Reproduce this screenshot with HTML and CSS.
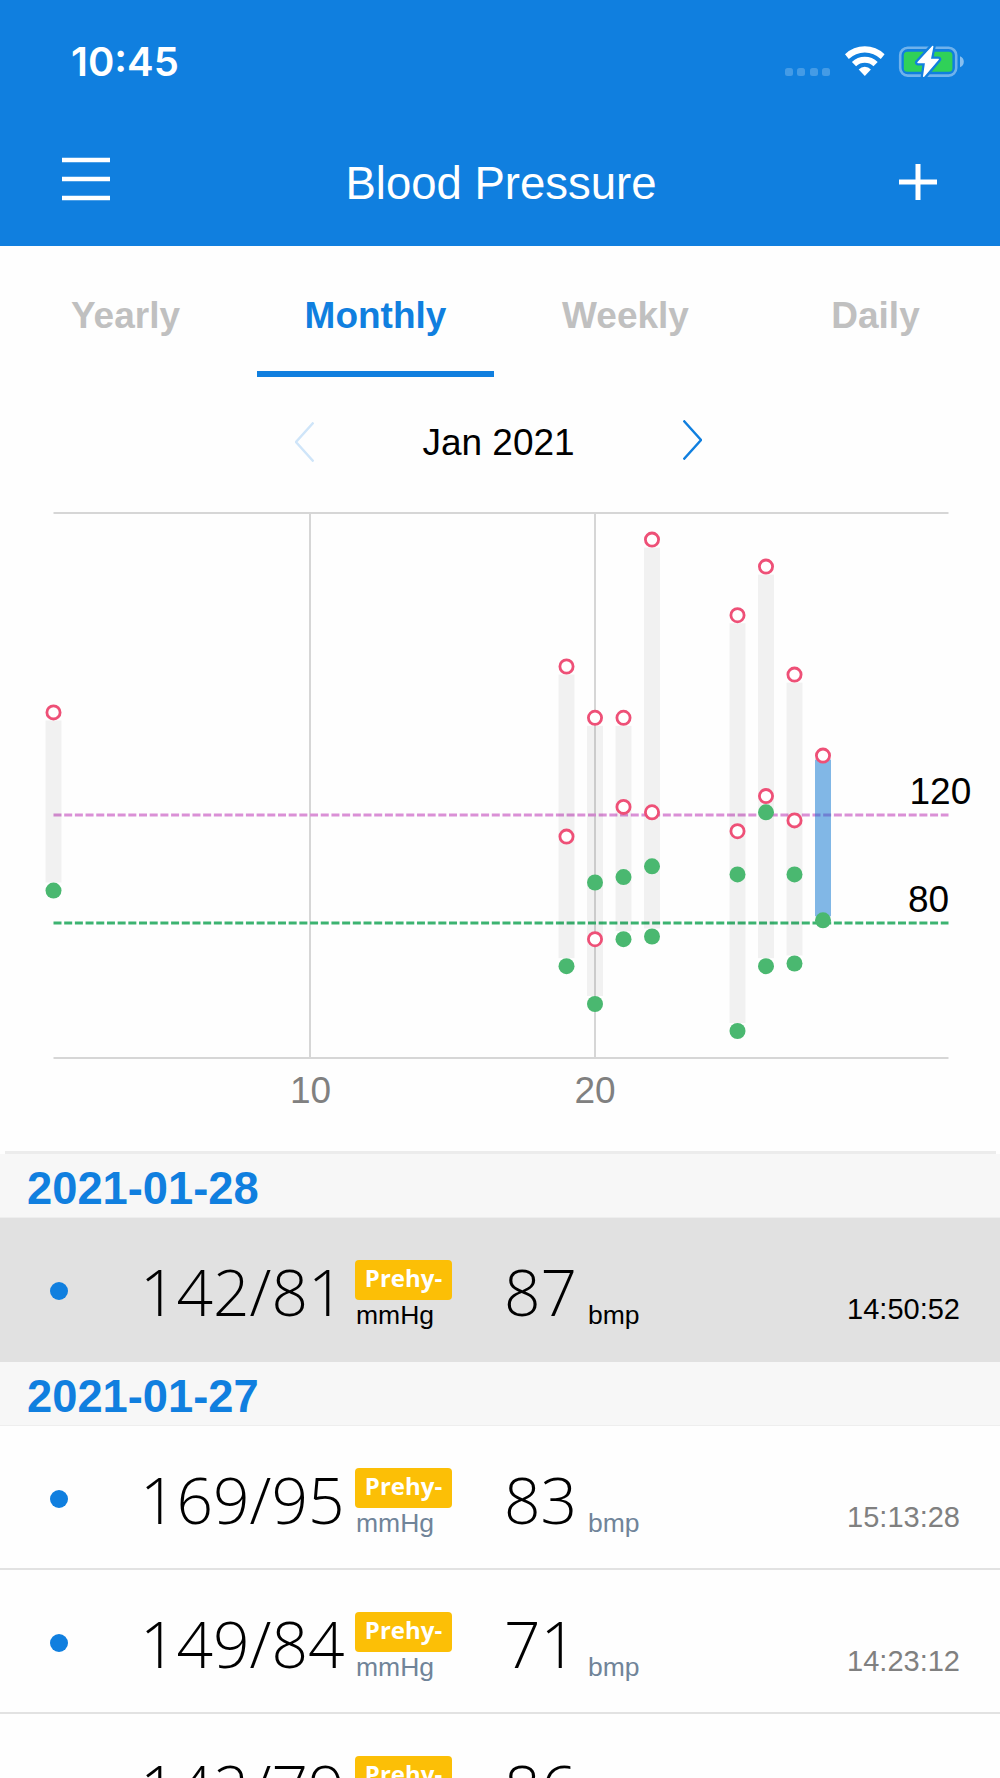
FILE: index.html
```html
<!DOCTYPE html>
<html lang="en">
<head>
  <meta charset="UTF-8" />
  <meta name="viewport" content="width=device-width, initial-scale=1.0"/>
  <title>Blood Pressure</title>
  <link rel="stylesheet" href="styles.css">
</head>
<body>
  <header class="header">
    <div class="status-bar">
      <span class="clock">10:45</span>
      <div class="status-icons">
        <div class="signal"><i></i><i></i><i></i><i></i></div>
        <svg class="wifi" width="42" height="32" viewBox="0 0 42 32" fill="#fff">
          <path d="M1 8.300A28.500 28.500 0 0 1 40.600 8.300L36.800 13A23 23 0 0 0 4.800 13Z"/>
          <path d="M7.900 16A18.200 18.200 0 0 1 33.700 16L29.500 20.300A12.600 12.600 0 0 0 12.100 20.300Z"/>
          <path d="M14.700 23.400A8.600 8.600 0 0 1 26.900 23.400L20.800 30Z"/>
        </svg>
        <svg class="battery" width="68" height="36" viewBox="0 0 68 36">
          <rect x="2.200" y="3.800" width="56" height="27.800" rx="7.500" fill="none" stroke="#fff" stroke-opacity=".4" stroke-width="2.600"/>
          <path d="M62 12.200c2.700 1 3.800 3 3.800 5.500s-1.100 4.500-3.800 5.500z" fill="#fff" fill-opacity=".5"/>
          <rect x="5.800" y="7.700" width="48.600" height="20" rx="3.500" fill="#30d158"/>
          <path d="M34.700 2.200L20 18.500H27.700L25.700 32.600L40.200 15.400H32.200Z" fill="#fff" stroke="#107fdf" stroke-width="6" stroke-linejoin="round"/>
          <path d="M34.700 2.500L20 18.500H27.700L25.700 32.300L40.200 15.400H32.200Z" fill="#fff" stroke="#fff" stroke-width="1.400" stroke-linejoin="round"/>
        </svg>
      </div>
    </div>
    <div class="nav-bar">
      <svg class="menu-icon" width="48" height="44" viewBox="0 0 48 44" stroke="#fff" stroke-width="4.600">
        <path d="M0 3H48M0 22H48M0 41H48"/>
      </svg>
      <h1>Blood Pressure</h1>
      <svg class="plus-icon" width="38" height="38" viewBox="0 0 38 38" stroke="#fff" stroke-width="5">
        <path d="M0 19H38M19 1V37"/>
      </svg>
    </div>
  </header>

  <nav class="tabs">
    <a class="tab">Yearly</a>
    <a class="tab active">Monthly</a>
    <a class="tab">Weekly</a>
    <a class="tab">Daily</a>
  </nav>

  <div class="month">
    <svg class="prev" width="19" height="40" viewBox="0 0 19 40" fill="none" stroke="#cfe5f9" stroke-width="2.400">
      <path d="M18.500 .5L1 20L18.500 39.500"/>
    </svg>
    <span>Jan 2021</span>
    <svg class="next" width="19" height="40" viewBox="0 0 19 40" fill="none" stroke="#107fdf" stroke-width="2.400">
      <path d="M.5 .5L18 20L.5 39.500"/>
    </svg>
  </div>

  <svg class="chart" width="1000" height="644" viewBox="0 0 1000 644">
    <path class="grid" d="M53.500 6H948.500M53.500 551H948.500M310 6V551M595 6V551"/>
    <path class="limit-sys" d="M53.500 308H948.500"/>
    <path class="limit-dia" d="M53.500 416H948.500"/>
    <g id="bars"></g>
    <g id="dots"></g>
    <text x="909.500" y="297">120</text>
    <text x="908" y="405">80</text>
    <text class="day" x="310.500" y="595.500">10</text>
    <text class="day" x="595" y="595.500">20</text>
  </svg>

  <div class="list">
    <h2>2021-01-28</h2>
    <div class="row selected">
      <span class="dot"></span>
      <span class="value">142/81</span>
      <div class="state"><span class="badge">Prehy-</span><span class="unit">mmHg</span></div>
      <span class="value">87</span>
      <span class="unit bmp">bmp</span>
      <span class="time">14:50:52</span>
    </div>
    <h2>2021-01-27</h2>
    <div class="row">
      <span class="dot"></span>
      <span class="value">169/95</span>
      <div class="state"><span class="badge">Prehy-</span><span class="unit">mmHg</span></div>
      <span class="value">83</span>
      <span class="unit bmp">bmp</span>
      <span class="time">15:13:28</span>
    </div>
    <div class="row">
      <span class="dot"></span>
      <span class="value">149/84</span>
      <div class="state"><span class="badge">Prehy-</span><span class="unit">mmHg</span></div>
      <span class="value">71</span>
      <span class="unit bmp">bmp</span>
      <span class="time">14:23:12</span>
    </div>
    <div class="row">
      <span class="dot"></span>
      <span class="value">142/79</span>
      <div class="state"><span class="badge">Prehy-</span></div>
      <span class="value">86</span>
    </div>
  </div>

  <script src="chart.js"></script>
</body>
</html>
```
FILE: styles.css
```css
:root {
  --blue: #107fdf;
  --yellow: #fcbf06;
  --green: #4ab870;
  --red: #ee5077;
  --gray: #808080;
}

* {
  box-sizing: border-box;
}

body {
  margin: 0;
  width: 1000px;
  height: 1778px;
  overflow: hidden;
  background: #fefefe;
  color: #000;
  font-family: "Liberation Sans", Arial, sans-serif;
}

h1, h2 {
  margin: 0;
}

svg {
  display: block;
  flex: none;
}

.header {
  height: 246px;
  background: var(--blue);
  color: #fff;
}

.status-bar {
  display: flex;
  justify-content: space-between;
  align-items: center;
  height: 120px;
  padding: 3px 34px 0 71px;
}

.clock {
  font: 600 40px "Inter", sans-serif;
}

.status-icons {
  display: flex;
  align-items: center;
}

.signal {
  display: flex;
  gap: 4.5px;
  margin: 20px 14px 0 0;
}

.signal i {
  width: 8px;
  height: 8px;
  border-radius: 2.5px;
  background: rgba(255, 255, 255, 0.22);
}

.wifi {
  margin-right: 12px;
}

.nav-bar {
  display: flex;
  justify-content: space-between;
  align-items: center;
  height: 126px;
  padding: 0 63px 0 62px;
}

.nav-bar h1 {
  padding: 2px 7px 0 0;
  font-size: 45.5px;
  font-weight: normal;
}

.menu-icon {
  margin-bottom: 8px;
}

.plus-icon {
  margin-bottom: 2px;
}

.tabs {
  display: grid;
  grid-template-columns: repeat(4, 1fr);
}

.tab {
  margin: 0 6px 0 7px;
  padding-top: 14px;
  border-bottom: 6px solid transparent;
  line-height: 111px;
  font-size: 37px;
  font-weight: bold;
  text-align: center;
  color: #c0c0c0;
}

.tab.active {
  color: var(--blue);
  border-color: var(--blue);
}

.month {
  display: grid;
  grid-template-columns: 19px 1fr 19px;
  align-items: center;
  height: 130px;
  padding: 0 298px 0 295px;
  font-size: 37px;
  text-align: center;
}

.month span {
  padding-top: 2px;
}

.next {
  margin-bottom: 5px;
}

.chart {
  font-size: 37px;
}

.grid {
  stroke: #d6d6d6;
  stroke-width: 2;
}

.limit-sys,
.limit-dia {
  stroke: #da90d6;
  stroke-width: 3;
  stroke-dasharray: 8 2.69;
}

.limit-dia {
  stroke: #3cb371;
}

.bar {
  fill: rgba(0, 0, 0, 0.05);
}

.bar.selected {
  fill: rgba(4, 112, 206, 0.5);
}

.sys {
  fill: #fff;
  stroke: var(--red);
  stroke-width: 2.8;
}

.dia {
  fill: var(--green);
}

.day {
  fill: var(--gray);
  text-anchor: middle;
}

.list::before {
  content: "";
  display: block;
  height: 3px;
  margin: 0 4px 0 5px;
  background: #ececec;
}

.list h2 {
  height: 64px;
  padding: 4px 0 0 27px;
  border-bottom: 1px solid #eee;
  background: #f7f7f7;
  color: var(--blue);
  font-size: 45.3px;
  line-height: 61px;
}

.row {
  display: grid;
  grid-template-columns: 90px 215px 149px 83px 100px 1fr;
  height: 144px;
  padding: 0 40px 0 50px;
  border-bottom: 2px solid #e2e2e2;
}

.row.selected {
  background: #e1e1e1;
  border: none;
}

.dot {
  width: 18px;
  height: 18px;
  margin-top: 64px;
  border-radius: 50%;
  background: var(--blue);
}

.value {
  padding-top: 2px;
  font: 300 64px/144px "Open Sans", sans-serif;
}

.state {
  padding-top: 42px;
}

.badge {
  display: block;
  width: 97px;
  height: 40px;
  border-radius: 4px;
  background: var(--yellow);
  color: #fff;
  font: bold 24px/36px "Open Sans", sans-serif;
  text-align: center;
}

.unit {
  display: block;
  padding-left: 1px;
  font-size: 26.5px;
  line-height: 30px;
  color: #708499;
}

.bmp {
  padding-top: 82px;
}

.time {
  padding-top: 76px;
  font-size: 29px;
  line-height: 31px;
  text-align: right;
  color: var(--gray);
}

.selected .unit,
.selected .time {
  color: #000;
}
```
FILE: chart.js
```js
// systolic / diastolic readings for each day of the month
const readings = [
  { day: 1, sys: [158], dia: [92] },
  { day: 19, sys: [175, 112], dia: [64] },
  { day: 20, sys: [156, 74], dia: [95, 50] },
  { day: 21, sys: [156, 123], dia: [97, 74] },
  { day: 22, sys: [222, 121], dia: [101, 75] },
  { day: 25, sys: [194, 114], dia: [98, 40] },
  { day: 26, sys: [212, 127], dia: [121, 64] },
  { day: 27, sys: [172, 118], dia: [98, 65] },
  { day: 28, sys: [142], dia: [81], selected: true }
];

const x = day => 53.5 + (day - 1) * 28.5;
const y = value => 632 - value * 2.7;

function add(parent, tag, attrs) {
  const el = document.createElementNS('http://www.w3.org/2000/svg', tag);
  for (const name in attrs) {
    el.setAttribute(name, attrs[name]);
  }
  document.getElementById(parent).appendChild(el);
}

readings.forEach(r => {
  const gap = r.selected ? 4 : 8;
  const top = y(Math.max(...r.sys)) + gap;
  const bottom = y(Math.min(...r.dia)) - gap;
  add('bars', 'rect', {
    class: r.selected ? 'bar selected' : 'bar',
    x: x(r.day) - 8, y: top, width: 16, height: bottom - top
  });
  r.sys.forEach(v => add('dots', 'circle', { class: 'sys', cx: x(r.day), cy: y(v), r: 6.6 }));
  r.dia.forEach(v => add('dots', 'circle', { class: 'dia', cx: x(r.day), cy: y(v), r: 8 }));
});
```
